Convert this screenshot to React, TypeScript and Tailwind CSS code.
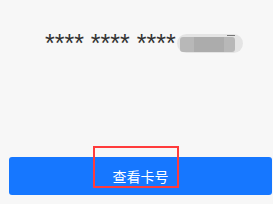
export default function App() {
  return (
    <div className="relative flex h-[204px] w-[273px] flex-col bg-[#f7f7f7] font-['Liberation_Sans','Noto_Sans_CJK_SC',sans-serif]">
      {/* masked card number */}
      <div className="flex items-start pl-[45px] pt-[28px]">
        <span className="text-[25px] leading-[30px] text-[#333333]">**** **** ****</span>
        <div className="relative ml-px mt-[6px] h-[19px] w-[66px] rounded-full bg-[#e4e4e4] blur-[0.6px]">
          <div className="absolute left-[3px] top-[3px] h-[15px] w-[55px] rounded-[3px] bg-[#b8b8b8]" />
          <div className="absolute left-[17px] top-[3px] h-[15px] w-[30px] bg-[#acacac]" />
          <div className="absolute left-[50px] top-px h-px w-[8px] bg-[#777777]" />
        </div>
      </div>

      <div className="flex-1" />

      {/* button */}
      <div className="pb-[9px] pl-[9px] pr-px">
        <button className="flex h-[38px] w-full items-center justify-center rounded-[3px] bg-[#1677ff] pt-[2px] text-[14px] text-white">
          查看卡号
        </button>
      </div>

      {/* annotation box */}
      <div className="absolute left-[93px] top-[146px] h-[42px] w-[86px] border-2 border-[#ff3b3b]" />
    </div>
  );
}
